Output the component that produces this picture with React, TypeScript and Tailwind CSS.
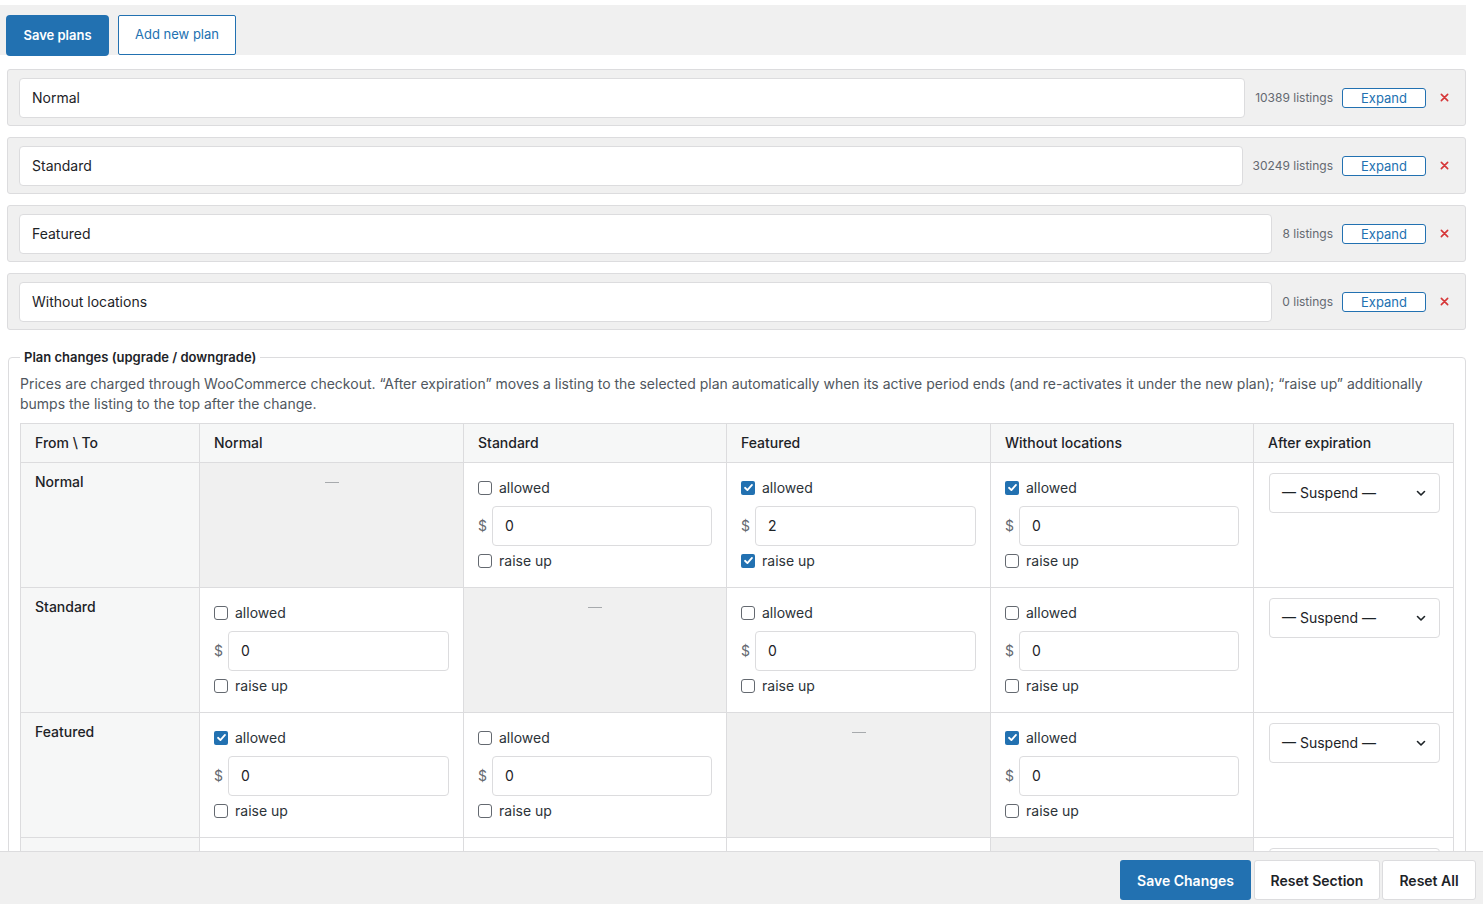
import React from "react";

type Cell = { diag: true } | { diag?: false; allowed: boolean; price: string; raise: boolean };

const plans = [
  { name: "Normal", count: "10389 listings" },
  { name: "Standard", count: "30249 listings" },
  { name: "Featured", count: "8 listings" },
  { name: "Without locations", count: "0 listings" },
];

const rows: { name: string; cells: Cell[] }[] = [
  {
    name: "Normal",
    cells: [
      { diag: true },
      { allowed: false, price: "0", raise: false },
      { allowed: true, price: "2", raise: true },
      { allowed: true, price: "0", raise: false },
    ],
  },
  {
    name: "Standard",
    cells: [
      { allowed: false, price: "0", raise: false },
      { diag: true },
      { allowed: false, price: "0", raise: false },
      { allowed: false, price: "0", raise: false },
    ],
  },
  {
    name: "Featured",
    cells: [
      { allowed: true, price: "0", raise: false },
      { allowed: false, price: "0", raise: false },
      { diag: true },
      { allowed: true, price: "0", raise: false },
    ],
  },
  {
    name: "Without locations",
    cells: [
      { allowed: false, price: "0", raise: false },
      { allowed: false, price: "0", raise: false },
      { allowed: false, price: "0", raise: false },
      { diag: true },
    ],
  },
];

function Check({ checked }: { checked: boolean }) {
  return checked ? (
    <span className="w-[14px] h-[14px] rounded-[2px] bg-[#2271b1] flex items-center justify-center shrink-0">
      <svg width="11" height="11" viewBox="0 0 12 12">
        <path d="M2.2 6.3 L4.8 8.8 L9.8 3.2" fill="none" stroke="#fff" strokeWidth="2" strokeLinecap="round" strokeLinejoin="round" />
      </svg>
    </span>
  ) : (
    <span className="w-[14px] h-[14px] rounded-[3px] border border-[#646970] bg-white shrink-0" />
  );
}

function PriceCell({ c }: { c: Cell }) {
  if (c.diag) {
    return (
      <td className="bg-[#f0f0f0] border border-[#dcdcde] align-top pt-[19px]">
        <div className="mx-auto w-[14px] h-px bg-[#a7aaad]" />
      </td>
    );
  }
  return (
    <td className="border border-[#dcdcde] align-top pt-[15px] pb-[16px] px-[14px]">
      <div className="h-[20px] flex items-center gap-[7px]">
        <Check checked={c.allowed} />
        <span className="text-[14px] text-[#2c3338]">allowed</span>
      </div>
      <div className="mt-[8px] flex items-center gap-[5px]">
        <span className="text-[14px] text-[#646970]">$</span>
        <div className="flex-1 h-[40px] rounded-[4px] border border-[#dcdcde] bg-white flex items-center pl-[12px] text-[14px] text-[#1d2327]">
          {c.price}
        </div>
      </div>
      <div className="mt-[5px] h-[20px] flex items-center gap-[7px]">
        <Check checked={c.raise} />
        <span className="text-[14px] text-[#2c3338]">raise up</span>
      </div>
    </td>
  );
}

export default function App() {
  return (
    <div className="min-h-screen bg-white text-[#1d2327] pb-[80px]" style={{ fontFamily: "Inter, 'Noto Sans', sans-serif" }}>
      <div className="w-[1466px]">
        {/* toolbar */}
        <div className="mt-[5px] h-[50px] bg-[#f0f0f0] flex items-start gap-[9px] pl-[6px] pt-[10px]">
          <button className="h-[41px] w-[103px] rounded-[4px] bg-[#2271b1] text-white text-[13px] font-semibold">Save plans</button>
          <button className="h-[40px] w-[118px] border border-[#2271b1] bg-white text-[#2271b1] text-[13px] rounded-[2px]">Add new plan</button>
        </div>

        {/* plan rows */}
        <div className="mt-[14px] ml-[7px] flex flex-col gap-[11px]">
          {plans.map((p) => (
            <div key={p.name} className="h-[57px] rounded-[3px] border border-[#dcdcde] bg-[#f0f0f0] flex items-center pl-[11px] pr-[13px]">
              <div className="flex-1 h-[40px] rounded-[4px] border border-[#dcdcde] bg-white flex items-center pl-[12px] text-[14px] text-[#1d2327]">
                {p.name}
              </div>
              <span className="ml-[10px] text-[12px] text-[#646970]">{p.count}</span>
              <button className="ml-[9px] w-[84px] h-[20px] rounded-[3px] border border-[#2271b1] bg-white text-[#2271b1] text-[13px] leading-none pt-[1px]">Expand</button>
              <span className="ml-[10px] w-[16px] flex justify-center">
                <svg width="9" height="9" viewBox="0 0 10 10">
                  <path d="M1.5 1.5 L8.5 8.5 M8.5 1.5 L1.5 8.5" stroke="#d63638" strokeWidth="1.8" strokeLinecap="round" />
                </svg>
              </span>
            </div>
          ))}
        </div>

        {/* fieldset */}
        <fieldset className="mt-[18px] ml-[8px] border border-[#dcdcde] rounded-[4px] px-[11px] pb-[20px]">
          <legend className="ml-[0px] px-[4px] text-[13px] font-semibold text-[#1d2327]">Plan changes (upgrade / downgrade)</legend>
          <p className="mt-[6px] text-[14px] leading-[20px] text-[#50575e]">
            Prices are charged through WooCommerce checkout. “After expiration” moves a listing to the selected plan automatically when its active period ends (and re-activates it under the new plan); “raise up” additionally bumps the listing to the top after the change.
          </p>
          <table className="mt-[9px] w-[1433px] table-fixed border-collapse border border-[#dcdcde]">
            <colgroup>
              <col className="w-[179px]" />
              <col className="w-[264px]" />
              <col className="w-[263px]" />
              <col className="w-[264px]" />
              <col className="w-[263px]" />
              <col className="w-[200px]" />
            </colgroup>
            <thead>
              <tr className="bg-[#f6f7f7] h-[39px]">
                {["From \\ To", "Normal", "Standard", "Featured", "Without locations", "After expiration"].map((h) => (
                  <th key={h} className="border border-[#dcdcde] text-left px-[14px] text-[14px] font-medium text-[#1d2327]">
                    {h}
                  </th>
                ))}
              </tr>
            </thead>
            <tbody>
              {rows.map((r) => (
                <tr key={r.name}>
                  <td className="bg-[#f6f7f7] border border-[#dcdcde] align-top px-[14px] pt-[9px] text-[14px] leading-[20px] font-medium text-[#1d2327]">
                    {r.name}
                  </td>
                  {r.cells.map((c, i) => (
                    <PriceCell key={i} c={c} />
                  ))}
                  <td className="border border-[#dcdcde] align-top pt-[10px] pl-[15px] pr-[13px]">
                    <div className="h-[40px] rounded-[4px] border border-[#dcdcde] bg-white flex items-center pl-[12px] pr-[12px] text-[14px] text-[#1d2327]">
                      <span className="flex-1">— Suspend —</span>
                      <svg width="12" height="12" viewBox="0 0 12 12">
                        <path d="M2.5 4.5 L6 8 L9.5 4.5" fill="none" stroke="#1d2327" strokeWidth="1.6" strokeLinecap="round" strokeLinejoin="round" />
                      </svg>
                    </div>
                  </td>
                </tr>
              ))}
            </tbody>
          </table>
        </fieldset>
      </div>

      {/* fixed footer */}
      <div className="fixed left-0 right-0 bottom-0 h-[53px] bg-[#f0f0f0] border-t border-[#dcdcde] flex items-start pt-[8px] justify-end pr-[7px] gap-[2px]">
        <button className="h-[40px] w-[131px] rounded-[3px] bg-[#2271b1] text-white text-[14px] font-semibold">Save Changes</button>
        <button className="h-[40px] w-[126px] rounded-[3px] bg-white border border-[#dcdcde] text-[#1d2327] text-[14px] font-semibold ml-[1px]">Reset Section</button>
        <button className="h-[40px] w-[94px] rounded-[3px] bg-white border border-[#dcdcde] text-[#1d2327] text-[14px] font-semibold">Reset All</button>
      </div>
    </div>
  );
}
